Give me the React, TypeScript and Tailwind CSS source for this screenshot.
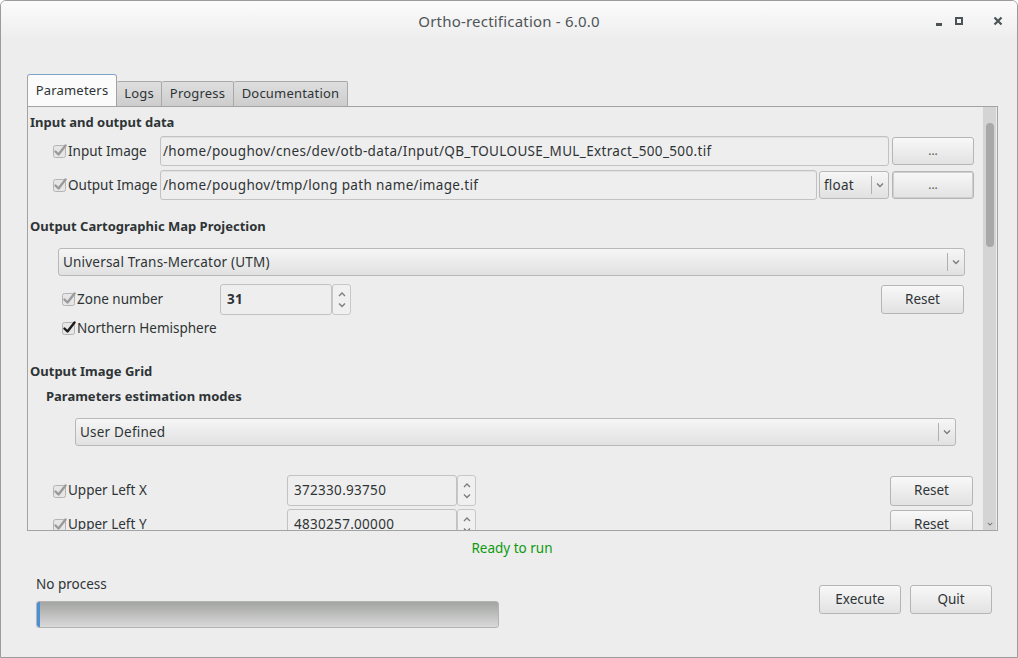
import React from "react";

const FONT = { fontFamily: '"Noto Sans", "Open Sans", sans-serif' };

function Check({ dark = false }: { dark?: boolean }) {
  return (
    <svg width="14" height="14" viewBox="0 0 14 14" className="shrink-0">
      <rect x="0.5" y="1.5" width="12" height="12" rx="2" fill="#e6e6e6" stroke="#b4b4b4" />
      <path
        d="M2.5 7.5 L5.5 10.5 L12.5 1.5"
        fill="none"
        stroke={dark ? "#1a1a1a" : "#9a9a9a"}
        strokeWidth="2.4"
        strokeLinecap="round"
        strokeLinejoin="round"
      />
    </svg>
  );
}

function Chevron({ up = false }: { up?: boolean }) {
  return (
    <svg width="8" height="6" viewBox="0 0 8 6">
      <path d={up ? "M1 5 L4 2 L7 5" : "M1 1.5 L4 4.5 L7 1.5"} fill="none" stroke="#7d7d7d" strokeWidth="1.4" />
    </svg>
  );
}

function Button({ label, w, h, pressed = false }: { label: string; w: string; h: string; pressed?: boolean }) {
  return (
    <div
      className={`${w} ${h} shrink-0 flex items-center justify-center rounded-[3px] border border-[#b5b5b5] bg-linear-to-b from-[#f8f8f8] to-[#e2e2e2] text-[#2e3436] ${
        pressed ? "shadow-[inset_0_0_0_1px_#cfcfcf]" : ""
      }`}
    >
      <span className={label === "..." ? "text-[#555] text-[12px]" : ""}>{label}</span>
    </div>
  );
}

function Combo({ text, w }: { text: string; w: string }) {
  return (
    <div
      className={`${w} h-[28px] shrink-0 flex items-center rounded-[3px] border border-[#b8b8b8] bg-linear-to-b from-[#f6f6f6] to-[#e1e1e1]`}
    >
      <span className="flex-1 pl-[4px] truncate tracking-[0.2px]">{text}</span>
      <div className="w-px h-[18px] bg-[#b0b0b0]" />
      <div className="w-[16px] flex justify-center">
        <Chevron />
      </div>
    </div>
  );
}

function LineEdit({ text, w }: { text: string; w: string }) {
  return (
    <div
      className={`${w} h-[30px] shrink-0 flex items-center rounded-[3px] border border-[#c2c2c2] bg-[#eeeeee] shadow-[inset_0_1px_1px_rgba(0,0,0,0.06)] px-[2px] overflow-hidden whitespace-nowrap tracking-[0.35px]`}
    >
      {text}
    </div>
  );
}

function Spin({ text, w, bold = false }: { text: string; w: string; bold?: boolean }) {
  return (
    <div className="flex h-[31px] shrink-0">
      <div
        className={`${w} h-full flex items-center rounded-[3px] border border-[#c2c2c2] bg-[#eeeeee] px-[6px] tracking-[0.3px] ${
          bold ? "font-bold" : ""
        }`}
      >
        {text}
      </div>
      <div className="w-[19px] h-full flex flex-col items-center justify-center gap-[5px] rounded-[3px] border border-[#c8c8c8] bg-[#f0f0f0]">
        <Chevron up />
        <Chevron />
      </div>
    </div>
  );
}

export default function App() {
  return (
    <div
      style={FONT}
      className="w-[1018px] h-[658px] bg-[#ededed] text-[13.5px] text-[#2e3436] border border-[#9b9b9b] rounded-t-[6px] overflow-hidden flex flex-col"
    >
      {/* Title bar */}
      <div className="h-[40px] shrink-0 flex items-center relative bg-linear-to-b from-[#fbfbfb] to-[#ededed]">
        <div className="flex-1 text-center text-[15px] text-[#4f5558] pt-[1px] tracking-[0.2px]">Ortho-rectification - 6.0.0</div>
        <div className="absolute right-0 top-0 h-full flex items-center pr-[14px]">
          <div className="w-[6px] h-[3px] bg-[#4c5356] mt-[7px]" />
          <div className="ml-[13px] w-[8px] h-[8px] border-2 border-[#4c5356]" />
          <svg width="10" height="10" viewBox="0 0 10 10" className="ml-[30px]">
            <path d="M1.5 1.5 L8.5 8.5 M8.5 1.5 L1.5 8.5" stroke="#4c5356" strokeWidth="2.2" />
          </svg>
        </div>
      </div>

      {/* Tabs */}
      <div className="ml-[26px] mt-[34px] flex items-end h-[31px] relative z-10 text-[13px]">
        <div className="w-[90px] h-[32px] flex items-center justify-center bg-[#fbfbfb] border border-[#a3a3a3] border-t-[#7fa4cc] border-b-0 rounded-t-[3px] tracking-[0.2px]">
          Parameters
        </div>
        <div className="w-[45px] h-[25px] flex items-center justify-center bg-linear-to-b from-[#dedede] to-[#cdcdcd] border border-[#a9a9a9] border-l-0 border-b-0 rounded-t-[2px] tracking-[0.2px]">
          Logs
        </div>
        <div className="w-[72px] h-[25px] flex items-center justify-center bg-linear-to-b from-[#dedede] to-[#cdcdcd] border border-[#a9a9a9] border-l-0 border-b-0 rounded-t-[2px] tracking-[0.2px]">
          Progress
        </div>
        <div className="w-[114px] h-[25px] flex items-center justify-center bg-linear-to-b from-[#dedede] to-[#cdcdcd] border border-[#a9a9a9] border-l-0 border-b-0 rounded-t-[2px] tracking-[0.2px]">
          Documentation
        </div>
      </div>

      {/* Panel */}
      <div className="ml-[26px] w-[971px] h-[425px] border border-[#a3a3a3] flex bg-[#ededed]">
        <div className="flex-1 overflow-hidden relative">
          <div className="pl-[2px]">
            {/* Input and output data */}
            <div className="mt-[7px] h-[18px] flex items-center font-bold text-[13px]">Input and output data</div>

            <div className="mt-[4px] h-[30px] flex items-center pl-[23px]">
              <div className="w-[107px] flex items-center gap-[1px]">
                <Check />
                <span>Input Image</span>
              </div>
              <LineEdit w="w-[729px]" text="/home/poughov/cnes/dev/otb-data/Input/QB_TOULOUSE_MUL_Extract_500_500.tif" />
              <div className="ml-[3px]">
                <Button label="..." w="w-[82px]" h="h-[28px]" />
              </div>
            </div>

            <div className="mt-[4px] h-[30px] flex items-center pl-[23px]">
              <div className="w-[107px] flex items-center gap-[1px]">
                <Check />
                <span className="whitespace-nowrap">Output Image</span>
              </div>
              <LineEdit w="w-[657px]" text="/home/poughov/tmp/long path name/image.tif" />
              <div className="ml-[2px]">
                <Combo text="float" w="w-[70px]" />
              </div>
              <div className="ml-[3px]">
                <Button label="..." w="w-[82px]" h="h-[28px]" pressed />
              </div>
            </div>

            {/* Projection */}
            <div className="mt-[18px] h-[18px] flex items-center font-bold text-[13px]">Output Cartographic Map Projection</div>
            <div className="mt-[12px] pl-[28px]">
              <Combo text="Universal Trans-Mercator (UTM)" w="w-[907px]" />
            </div>
            <div className="mt-[8px] h-[30px] flex items-center pl-[32px]">
              <div className="w-[158px] flex items-center gap-[1px]">
                <Check />
                <span>Zone number</span>
              </div>
              <Spin text="31" w="w-[112px]" bold />
              <div className="flex-1" />
              <div className="mr-[19px]">
                <Button label="Reset" w="w-[83px]" h="h-[29px]" />
              </div>
            </div>
            <div className="mt-[5px] h-[18px] flex items-center pl-[32px] gap-[1px]">
              <Check dark />
              <span>Northern Hemisphere</span>
            </div>

            {/* Output Image Grid */}
            <div className="mt-[26px] h-[18px] flex items-center font-bold text-[13px]">Output Image Grid</div>
            <div className="mt-[7px] h-[18px] flex items-center font-bold pl-[16px] text-[13px]">Parameters estimation modes</div>
            <div className="mt-[12px] pl-[45px]">
              <Combo text="User Defined" w="w-[881px]" />
            </div>

            <div className="mt-[29px] h-[31px] flex items-center pl-[23px]">
              <div className="w-[234px] flex items-center gap-[1px]">
                <Check />
                <span>Upper Left X</span>
              </div>
              <Spin text="372330.93750" w="w-[170px]" />
              <div className="flex-1" />
              <div className="mr-[10px]">
                <Button label="Reset" w="w-[83px]" h="h-[30px]" />
              </div>
            </div>
            <div className="mt-[3px] h-[31px] flex items-center pl-[23px]">
              <div className="w-[234px] flex items-center gap-[1px]">
                <Check />
                <span>Upper Left Y</span>
              </div>
              <Spin text="4830257.00000" w="w-[170px]" />
              <div className="flex-1" />
              <div className="mr-[10px]">
                <Button label="Reset" w="w-[83px]" h="h-[30px]" />
              </div>
            </div>
          </div>
        </div>
        {/* Scrollbar */}
        <div className="w-[13px] bg-[#d4d4d4] flex flex-col items-center mr-[1px]">
          <div className="h-[10px]" />
          <div className="mt-[6px] w-[8px] h-[124px] rounded-[4px] bg-[#a8a8a8]" />
          <div className="flex-1" />
          <div className="mb-[3px] scale-75">
            <Chevron />
          </div>
        </div>
      </div>

      {/* Status */}
      <div className="mt-[8px] h-[18px] flex items-center justify-center text-[#0f9a0f] pl-[6px]">Ready to run</div>

      <div className="mt-[18px] flex">
        <div className="ml-[35px] flex flex-col">
          <div className="h-[18px] flex items-center">No process</div>
          <div className="mt-[8px] w-[463px] h-[27px] rounded-[3px] border border-[#b3b3b3] bg-linear-to-b from-[#a3a5a2] to-[#d9d9d9] flex overflow-hidden">
            <div className="w-[3px] h-full bg-[#4a90d9] rounded-l-[2px]" />
          </div>
        </div>
        <div className="flex-1" />
        <div className="mt-[10px] flex gap-[9px] mr-[25px]">
          <Button label="Execute" w="w-[82px]" h="h-[29px]" />
          <Button label="Quit" w="w-[82px]" h="h-[29px]" />
        </div>
      </div>
    </div>
  );
}
